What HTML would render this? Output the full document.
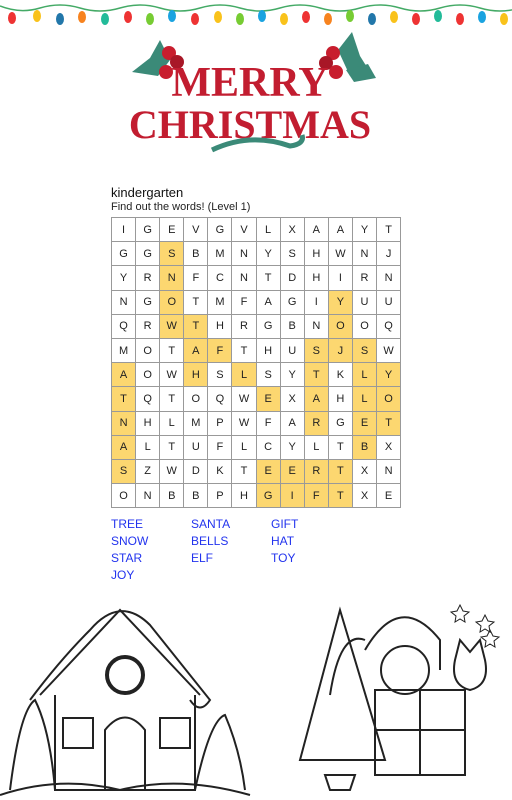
<!DOCTYPE html>
<html><head><style>
body{margin:0;width:512px;height:800px;background:#fff;position:relative;overflow:hidden;font-family:"Liberation Sans",Arial,sans-serif}
.t1{position:absolute;left:111px;top:185px;font-size:13px;color:#111}
.t2{position:absolute;left:111px;top:201px;font-size:11px;color:#222}
table{position:absolute;left:111px;top:217px;border-collapse:collapse}
td{width:23.1px;height:23.2px;border:1px solid #999;text-align:center;font-size:11px;color:#222;padding:0}
td.h{background:#fcd770}
.w{position:absolute;font-size:12px;color:#2233ee}
</style></head><body>
<svg width="512" height="40" style="position:absolute;left:0;top:0">
<path d="M0 6 Q20 14 40 8 T80 8 T120 8 T160 8 T200 8 T240 8 T280 8 T320 8 T360 8 T400 8 T440 8 T480 8 T520 8" stroke="#4a6" stroke-width="1.5" fill="none"/>
<g>
<ellipse cx="12" cy="18" rx="4" ry="6" fill="#e33"/><ellipse cx="37" cy="16" rx="4" ry="6" fill="#f9c21b"/><ellipse cx="60" cy="19" rx="4" ry="6" fill="#27a"/><ellipse cx="82" cy="17" rx="4" ry="6" fill="#f7831f"/><ellipse cx="105" cy="19" rx="4" ry="6" fill="#2b9"/><ellipse cx="128" cy="17" rx="4" ry="6" fill="#e33"/><ellipse cx="150" cy="19" rx="4" ry="6" fill="#7c3"/><ellipse cx="172" cy="16" rx="4" ry="6" fill="#1aa3e0"/><ellipse cx="195" cy="19" rx="4" ry="6" fill="#e33"/><ellipse cx="218" cy="17" rx="4" ry="6" fill="#f9c21b"/><ellipse cx="240" cy="19" rx="4" ry="6" fill="#7c3"/><ellipse cx="262" cy="16" rx="4" ry="6" fill="#1aa3e0"/><ellipse cx="284" cy="19" rx="4" ry="6" fill="#f9c21b"/><ellipse cx="306" cy="17" rx="4" ry="6" fill="#e33"/><ellipse cx="328" cy="19" rx="4" ry="6" fill="#f7831f"/><ellipse cx="350" cy="16" rx="4" ry="6" fill="#7c3"/><ellipse cx="372" cy="19" rx="4" ry="6" fill="#27a"/><ellipse cx="394" cy="17" rx="4" ry="6" fill="#f9c21b"/><ellipse cx="416" cy="19" rx="4" ry="6" fill="#e33"/><ellipse cx="438" cy="16" rx="4" ry="6" fill="#2b9"/><ellipse cx="460" cy="19" rx="4" ry="6" fill="#e33"/><ellipse cx="482" cy="17" rx="4" ry="6" fill="#1aa3e0"/><ellipse cx="504" cy="19" rx="4" ry="6" fill="#f9c21b"/>
</g></svg>
<svg width="260" height="150" style="position:absolute;left:120px;top:20px">
<path d="M12 52 L30 38 L40 20 L50 40 L38 56 Z" fill="#3b8a78"/><path d="M218 30 L232 12 L240 36 L250 52 L230 56 Z" fill="#3b8a78"/><path d="M226 50 L248 44 L256 58 L234 62 Z" fill="#3b8a78"/>
<circle cx="49" cy="33" r="7" fill="#c81e2e"/><circle cx="57" cy="42" r="7" fill="#a81727"/><circle cx="46" cy="52" r="7" fill="#c81e2e"/>
<circle cx="213" cy="33" r="7" fill="#c81e2e"/><circle cx="206" cy="43" r="7" fill="#a81727"/><circle cx="216" cy="52" r="7" fill="#c81e2e"/>
<text x="130" y="76" text-anchor="middle" font-family="Liberation Serif,serif" font-weight="bold" font-size="42" fill="#c21d30">MERRY</text>
<text x="130" y="118" text-anchor="middle" font-family="Liberation Serif,serif" font-weight="bold" font-size="40" fill="#c21d30">CHRISTMAS</text>
<path d="M92 130 Q130 112 170 126 Q185 124 182 115" stroke="#3b8a78" stroke-width="5" fill="none"/>
</svg>
<div class="t1">kindergarten</div>
<div class="t2">Find out the words! (Level 1)</div>
<table>
<tr><td>I</td><td>G</td><td>E</td><td>V</td><td>G</td><td>V</td><td>L</td><td>X</td><td>A</td><td>A</td><td>Y</td><td>T</td></tr>
<tr><td>G</td><td>G</td><td class="h">S</td><td>B</td><td>M</td><td>N</td><td>Y</td><td>S</td><td>H</td><td>W</td><td>N</td><td>J</td></tr>
<tr><td>Y</td><td>R</td><td class="h">N</td><td>F</td><td>C</td><td>N</td><td>T</td><td>D</td><td>H</td><td>I</td><td>R</td><td>N</td></tr>
<tr><td>N</td><td>G</td><td class="h">O</td><td>T</td><td>M</td><td>F</td><td>A</td><td>G</td><td>I</td><td class="h">Y</td><td>U</td><td>U</td></tr>
<tr><td>Q</td><td>R</td><td class="h">W</td><td class="h">T</td><td>H</td><td>R</td><td>G</td><td>B</td><td>N</td><td class="h">O</td><td>O</td><td>Q</td></tr>
<tr><td>M</td><td>O</td><td>T</td><td class="h">A</td><td class="h">F</td><td>T</td><td>H</td><td>U</td><td class="h">S</td><td class="h">J</td><td class="h">S</td><td>W</td></tr>
<tr><td class="h">A</td><td>O</td><td>W</td><td class="h">H</td><td>S</td><td class="h">L</td><td>S</td><td>Y</td><td class="h">T</td><td>K</td><td class="h">L</td><td class="h">Y</td></tr>
<tr><td class="h">T</td><td>Q</td><td>T</td><td>O</td><td>Q</td><td>W</td><td class="h">E</td><td>X</td><td class="h">A</td><td>H</td><td class="h">L</td><td class="h">O</td></tr>
<tr><td class="h">N</td><td>H</td><td>L</td><td>M</td><td>P</td><td>W</td><td>F</td><td>A</td><td class="h">R</td><td>G</td><td class="h">E</td><td class="h">T</td></tr>
<tr><td class="h">A</td><td>L</td><td>T</td><td>U</td><td>F</td><td>L</td><td>C</td><td>Y</td><td>L</td><td>T</td><td class="h">B</td><td>X</td></tr>
<tr><td class="h">S</td><td>Z</td><td>W</td><td>D</td><td>K</td><td>T</td><td class="h">E</td><td class="h">E</td><td class="h">R</td><td class="h">T</td><td>X</td><td>N</td></tr>
<tr><td>O</td><td>N</td><td>B</td><td>B</td><td>P</td><td>H</td><td class="h">G</td><td class="h">I</td><td class="h">F</td><td class="h">T</td><td>X</td><td>E</td></tr>
</table>
<div class="w" style="left:111px;top:517px">TREE</div><div class="w" style="left:191px;top:517px">SANTA</div><div class="w" style="left:271px;top:517px">GIFT</div>
<div class="w" style="left:111px;top:534px">SNOW</div><div class="w" style="left:191px;top:534px">BELLS</div><div class="w" style="left:271px;top:534px">HAT</div>
<div class="w" style="left:111px;top:551px">STAR</div><div class="w" style="left:191px;top:551px">ELF</div><div class="w" style="left:271px;top:551px">TOY</div>
<div class="w" style="left:111px;top:568px">JOY</div>
<svg width="512" height="210" style="position:absolute;left:0;top:590px" fill="none" stroke="#222" stroke-width="2">
<path d="M40 105 L120 20 L200 105"/><path d="M30 110 Q60 70 90 40 Q120 5 150 35 L210 110 Q200 125 190 110"/>
<path d="M55 105 L55 200 L195 200 L195 105"/><path d="M105 200 L105 140 Q125 115 145 140 L145 200"/>
<rect x="63" y="128" width="30" height="30"/><rect x="160" y="128" width="30" height="30"/>
<circle cx="125" cy="85" r="18" stroke-width="4"/><path d="M10 200 Q20 120 35 110 Q50 140 55 200"/><path d="M195 200 Q210 130 225 125 Q240 160 245 200"/>
<path d="M0 205 Q60 185 120 200 Q180 185 250 205"/>
<path d="M340 20 L300 170 L385 170 Z"/><path d="M330 105 Q340 40 365 50"/>
<path d="M365 60 Q400 0 440 50 L440 80"/><circle cx="405" cy="80" r="24"/>
<rect x="375" y="100" width="90" height="85"/><path d="M420 100 L420 185 M375 140 L465 140"/>
<path d="M455 70 L460 50 L470 62 L480 50 L485 70 Q490 95 470 100 Q450 95 455 70"/>
<path d="M325 185 L355 185 L350 200 L330 200 Z"/>
<path d="M460 15 l3 6 6 1-5 4 1 6-5-3-5 3 1-6-5-4 6-1z M485 25 l3 6 6 1-5 4 1 6-5-3-5 3 1-6-5-4 6-1z M490 40 l3 6 6 1-5 4 1 6-5-3-5 3 1-6-5-4 6-1z" stroke-width="1"/>
</svg>
</body></html>
